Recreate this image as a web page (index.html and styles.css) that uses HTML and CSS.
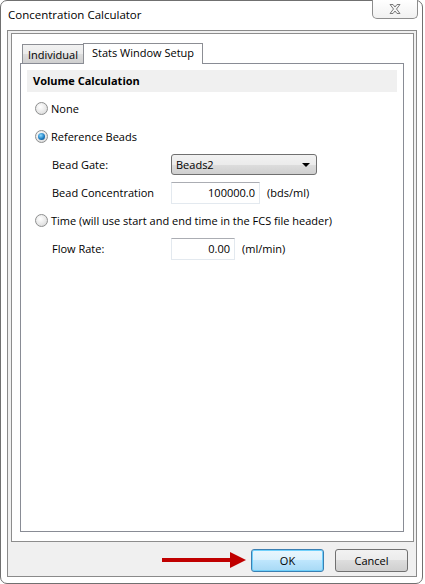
FILE: index.html
```html
<!DOCTYPE html>
<html>
<head>
	<title>Concentration Calculator</title>
	<meta charset="utf-8">
	<link rel="stylesheet" href="styles.css">
</head>
<body>
	<div class="window">
		<div class="titlebar">
			<span class="title">Concentration Calculator</span>
			<div class="close">
				<svg width="12" height="10" viewBox="0 0 12 10">
					<path d="M1 0.5 H4 L6 3 L8 0.5 H11 L7.5 5 L11 9.5 H8 L6 7 L4 9.5 H1 L4.5 5 Z" fill="#f4f4f4" stroke="#7a7a7a" stroke-width="1"/>
				</svg>
			</div>
		</div>
		<div class="client">
			<div class="panel">
				<div class="tabs">
					<div class="tab">Individual</div>
					<div class="tab active">Stats Window Setup</div>
				</div>
				<div class="page">
					<div class="section">Volume Calculation</div>
					<div class="row">
						<span class="radio"></span>
						<span>None</span>
					</div>
					<div class="row">
						<span class="radio checked"></span>
						<span>Reference Beads</span>
					</div>
					<div class="row sub">
						<span class="label">Bead Gate:</span>
						<div class="combo">
							<span>Beads2</span>
							<span class="caret"></span>
						</div>
					</div>
					<div class="row sub">
						<span class="label">Bead Concentration</span>
						<div class="field wide">100000.0</div>
						<span class="unit">(bds/ml)</span>
					</div>
					<div class="row">
						<span class="radio"></span>
						<span>Time (will use start and end time in the FCS file header)</span>
					</div>
					<div class="row sub">
						<span class="label">Flow Rate:</span>
						<div class="field">0.00</div>
						<span class="unit">(ml/min)</span>
					</div>
				</div>
			</div>
			<div class="footer">
				<svg class="arrow" width="84" height="16" viewBox="0 0 84 16">
					<rect x="0" y="6" width="70" height="4" fill="#c00000"/>
					<polygon points="68,0 84,8 68,16" fill="#c00000"/>
				</svg>
				<div class="button default">OK</div>
				<div class="button">Cancel</div>
			</div>
		</div>
	</div>
</body>
</html>
```

FILE: styles.css
```css
*{
	margin:0;
	padding:0;
	box-sizing:border-box;
}
body{
	background:#fff;
	font-family:"Open Sans","Noto Sans",sans-serif;
	font-size:11px;
	color:#000;
}
.window{
	width:423px;
	height:584px;
	border:1px solid #707070;
	border-radius:7px;
	background:#fff;
	display:flex;
	flex-direction:column;
}
.titlebar{
	height:29px;
	display:flex;
	align-items:flex-start;
	padding-left:7px;
}
.title{
	margin-top:6px;
	font-size:11.5px;
}
.close{
	margin-left:auto;
	margin-right:4px;
	margin-top:-1px;
	width:46px;
	height:19px;
	border:1px solid #8d8d8d;
	border-top:none;
	border-radius:0 0 5px 5px;
	background:linear-gradient(#ffffff,#f1f1f1);
	display:flex;
	align-items:center;
	justify-content:center;
}
.close svg{
	margin-top:-1px;
}
.client{
	flex:1;
	margin:0 5px 6px 6px;
	border:1px solid #8a8a8a;
	background:#f0f0f0;
	display:flex;
	flex-direction:column;
}
.panel{
	height:509px;
	margin:2px 2px 0 3px;
	border:1px solid #8d8d8d;
	background:#fff;
	padding:9px 9px 9px 8px;
	display:flex;
	flex-direction:column;
}
.tabs{
	display:flex;
	align-items:flex-end;
	padding-left:2px;
	height:21px;
	position:relative;
	z-index:1;
	margin-bottom:-1px;
}
.tab{
	height:19px;
	padding:0 5px;
	border:1px solid #8c8e94;
	border-bottom:none;
	background:linear-gradient(#f2f2f2,#ebebeb 50%,#dddddd 50%,#cfcfcf);
	line-height:19px;
	margin-bottom:1px;
}
.tab.active{
	height:21px;
	margin-bottom:0;
	margin-left:-1px;
	padding:0 8px 0 8px;
	background:#fff;
	line-height:18px;
}
.page{
	flex:1;
	border:1px solid #898c95;
	background:#fff;
	padding:6px 6px 0 6px;
}
.section{
	height:22px;
	background:#f0f0f0;
	font-weight:bold;
	line-height:21px;
	padding-left:6px;
	margin-bottom:3px;
}
.row{
	height:28px;
	display:flex;
	align-items:center;
	padding-left:8px;
	padding-bottom:1px;
}
.row.sub{
	padding-left:25px;
}
.radio{
	width:13px;
	height:13px;
	border:1px solid #8e8f8f;
	border-radius:50%;
	background:radial-gradient(circle at 40% 35%,#ffffff,#e6e6e6 60%,#cfcfcf);
	margin-right:3px;
	position:relative;
}
.radio.checked::after{
	content:"";
	position:absolute;
	left:2px;
	top:2px;
	width:7px;
	height:7px;
	border-radius:50%;
	background:radial-gradient(circle at 40% 35%,#8fdcff,#1f7ec3 55%,#0b3c6a);
}
.label{
	width:119px;
}
.combo{
	width:146px;
	height:21px;
	border:1px solid #707070;
	border-radius:3px;
	background:linear-gradient(#f2f2f2,#ebebeb 50%,#dddddd 50%,#cfcfcf);
	display:flex;
	align-items:center;
	padding:0 6px 0 4px;
	justify-content:space-between;
}
.caret{
	width:0;
	height:0;
	border-left:4px solid transparent;
	border-right:4px solid transparent;
	border-top:4px solid #000;
}
.field{
	width:64px;
	height:22px;
	border:1px solid #e3e9ef;
	border-top-color:#abadb3;
	background:#fff;
	text-align:right;
	line-height:20px;
	padding-right:4px;
}
.field.wide{
	width:89px;
}
.unit{
	margin-left:7px;
}
.footer{
	flex:1;
	display:flex;
	align-items:center;
	justify-content:flex-end;
	padding-right:8px;
	padding-top:2px;
}
.arrow{
	margin-right:5px;
}
.button{
	width:73px;
	height:23px;
	border:1px solid #707070;
	border-radius:3px;
	background:linear-gradient(#f2f2f2,#ebebeb 50%,#dddddd 50%,#cfcfcf);
	text-align:center;
	line-height:21px;
	margin-left:11px;
}
.button.default{
	margin-left:0;
	border-color:#3c7fb1;
	background:linear-gradient(#eaf6fd,#d9f0fc 50%,#bee6fd 50%,#a7d9f5);
	box-shadow:inset 0 0 0 1px #6fd0fb;
}
```
